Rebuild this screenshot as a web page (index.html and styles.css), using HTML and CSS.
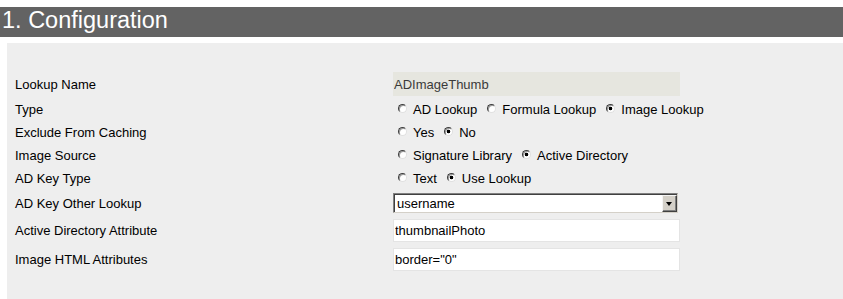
FILE: index.html
```html
<!DOCTYPE html>
<html>
<head>
  <meta charset="UTF-8">
  <title>Lookup Configuration</title>
  <link rel="stylesheet" href="styles.css">
</head>
<body>
  <header class="section-title">
    <h1>1. Configuration</h1>
  </header>
  <main class="panel">
    <div class="form-grid">
      <div class="field-label row-input">Lookup Name</div>
      <div class="field-value row-input">
        <input type="text" class="text-input readonly" value="ADImageThumb" readonly>
      </div>

      <div class="field-label row-radio">Type</div>
      <div class="field-value row-radio radio-group">
        <label class="opt"><input type="radio" name="type">AD Lookup</label>
        <label class="opt"><input type="radio" name="type">Formula Lookup</label>
        <label class="opt"><input type="radio" name="type" checked>Image Lookup</label>
      </div>

      <div class="field-label row-radio">Exclude From Caching</div>
      <div class="field-value row-radio radio-group">
        <label class="opt"><input type="radio" name="cache">Yes</label>
        <label class="opt"><input type="radio" name="cache" checked>No</label>
      </div>

      <div class="field-label row-radio">Image Source</div>
      <div class="field-value row-radio radio-group">
        <label class="opt"><input type="radio" name="source">Signature Library</label>
        <label class="opt"><input type="radio" name="source" checked>Active Directory</label>
      </div>

      <div class="field-label row-radio">AD Key Type</div>
      <div class="field-value row-radio radio-group">
        <label class="opt"><input type="radio" name="keytype">Text</label>
        <label class="opt"><input type="radio" name="keytype" checked>Use Lookup</label>
      </div>

      <div class="field-label row-select">AD Key Other Lookup</div>
      <div class="field-value row-select">
        <div class="select-wrap">
          <select class="select-box">
            <option>username</option>
          </select>
          <span class="select-arrow"></span>
        </div>
      </div>

      <div class="field-label row-text">Active Directory Attribute</div>
      <div class="field-value row-text">
        <input type="text" class="text-input" value="thumbnailPhoto">
      </div>

      <div class="field-label row-text">Image HTML Attributes</div>
      <div class="field-value row-text">
        <input type="text" class="text-input" value='border="0"'>
      </div>
    </div>
  </main>
</body>
</html>
```

FILE: styles.css
```css
body {
  margin: 0;
  padding: 0;
  background-color: #fff;
  font-family: "Liberation Sans", Arial, sans-serif;
  font-size: 13px;
  color: #000;
}

.section-title {
  margin-top: 7px;
  height: 30px;
  background-color: #636363;
}

.section-title h1 {
  margin: 0;
  padding-left: 2px;
  font-size: 23.5px;
  font-weight: normal;
  line-height: 26px;
  color: #fff;
}

.panel {
  display: block;
  box-sizing: border-box;
  height: 256px;
  margin: 6px 0 0 7px;
  padding: 27px 0 0 8px;
  background-color: #eeeeee;
}

.form-grid {
  display: grid;
  grid-template-columns: 378px 287px;
  grid-template-rows: 28px 23px 23px 23px 23px 26px 29px 29px;
  align-items: center;
}

.field-label,
.field-value {
  display: flex;
  align-items: center;
  height: 100%;
}

.text-input {
  box-sizing: border-box;
  width: 287px;
  height: 23px;
  margin: 0;
  padding: 0 0 0 1px;
  border: 1px solid #e4e4e4;
  background-color: #fff;
  font-family: inherit;
  font-size: 13px;
  color: #000;
  outline: none;
}

.text-input.readonly {
  height: 24px;
  border: none;
  padding-left: 1px;
  background-color: #e6e6df;
  color: #3a3a3a;
}

/* radio rows */
.opt {
  display: flex;
  align-items: center;
  margin-left: 10px;
  white-space: nowrap;
}

.opt:first-child {
  margin-left: 5px;
}

.opt input[type="radio"] {
  -webkit-appearance: none;
  appearance: none;
  box-sizing: border-box;
  width: 9px;
  height: 9px;
  margin: 0 6px 2px 0;
  border: 1px solid;
  border-color: #3c3c3c #e0e0e0 #e0e0e0 #3c3c3c;
  border-radius: 50%;
  background-color: #fff;
  box-shadow: inset 1px 1px 0 #9a9a9a;
}

.opt input[type="radio"]:checked {
  background: radial-gradient(circle, #000 0 1.6px, #fff 2.1px);
}

/* classic dropdown */
.select-wrap {
  position: relative;
  width: 285px;
  height: 20px;
}

.select-box {
  -webkit-appearance: none;
  appearance: none;
  box-sizing: border-box;
  width: 100%;
  height: 100%;
  margin: 0;
  padding: 0 0 0 3px;
  border: 1px solid;
  border-color: #808080 #d4d0c8 #d4d0c8 #808080;
  box-shadow: inset 1px 1px 0 #404040;
  border-radius: 0;
  background-color: #fff;
  font-family: inherit;
  font-size: 13px;
  color: #000;
  outline: none;
}

.select-arrow {
  position: absolute;
  top: 2px;
  right: 1px;
  box-sizing: border-box;
  width: 15px;
  height: 17px;
  background-color: #d4d0c8;
  border: 1px solid;
  border-color: #f4f4f4 #404040 #404040 #f4f4f4;
  box-shadow: inset -1px -1px 0 #808080;
}

.select-arrow::after {
  content: "";
  position: absolute;
  left: 3px;
  top: 6px;
  border-left: 3.5px solid transparent;
  border-right: 3.5px solid transparent;
  border-top: 4px solid #000;
}
```
